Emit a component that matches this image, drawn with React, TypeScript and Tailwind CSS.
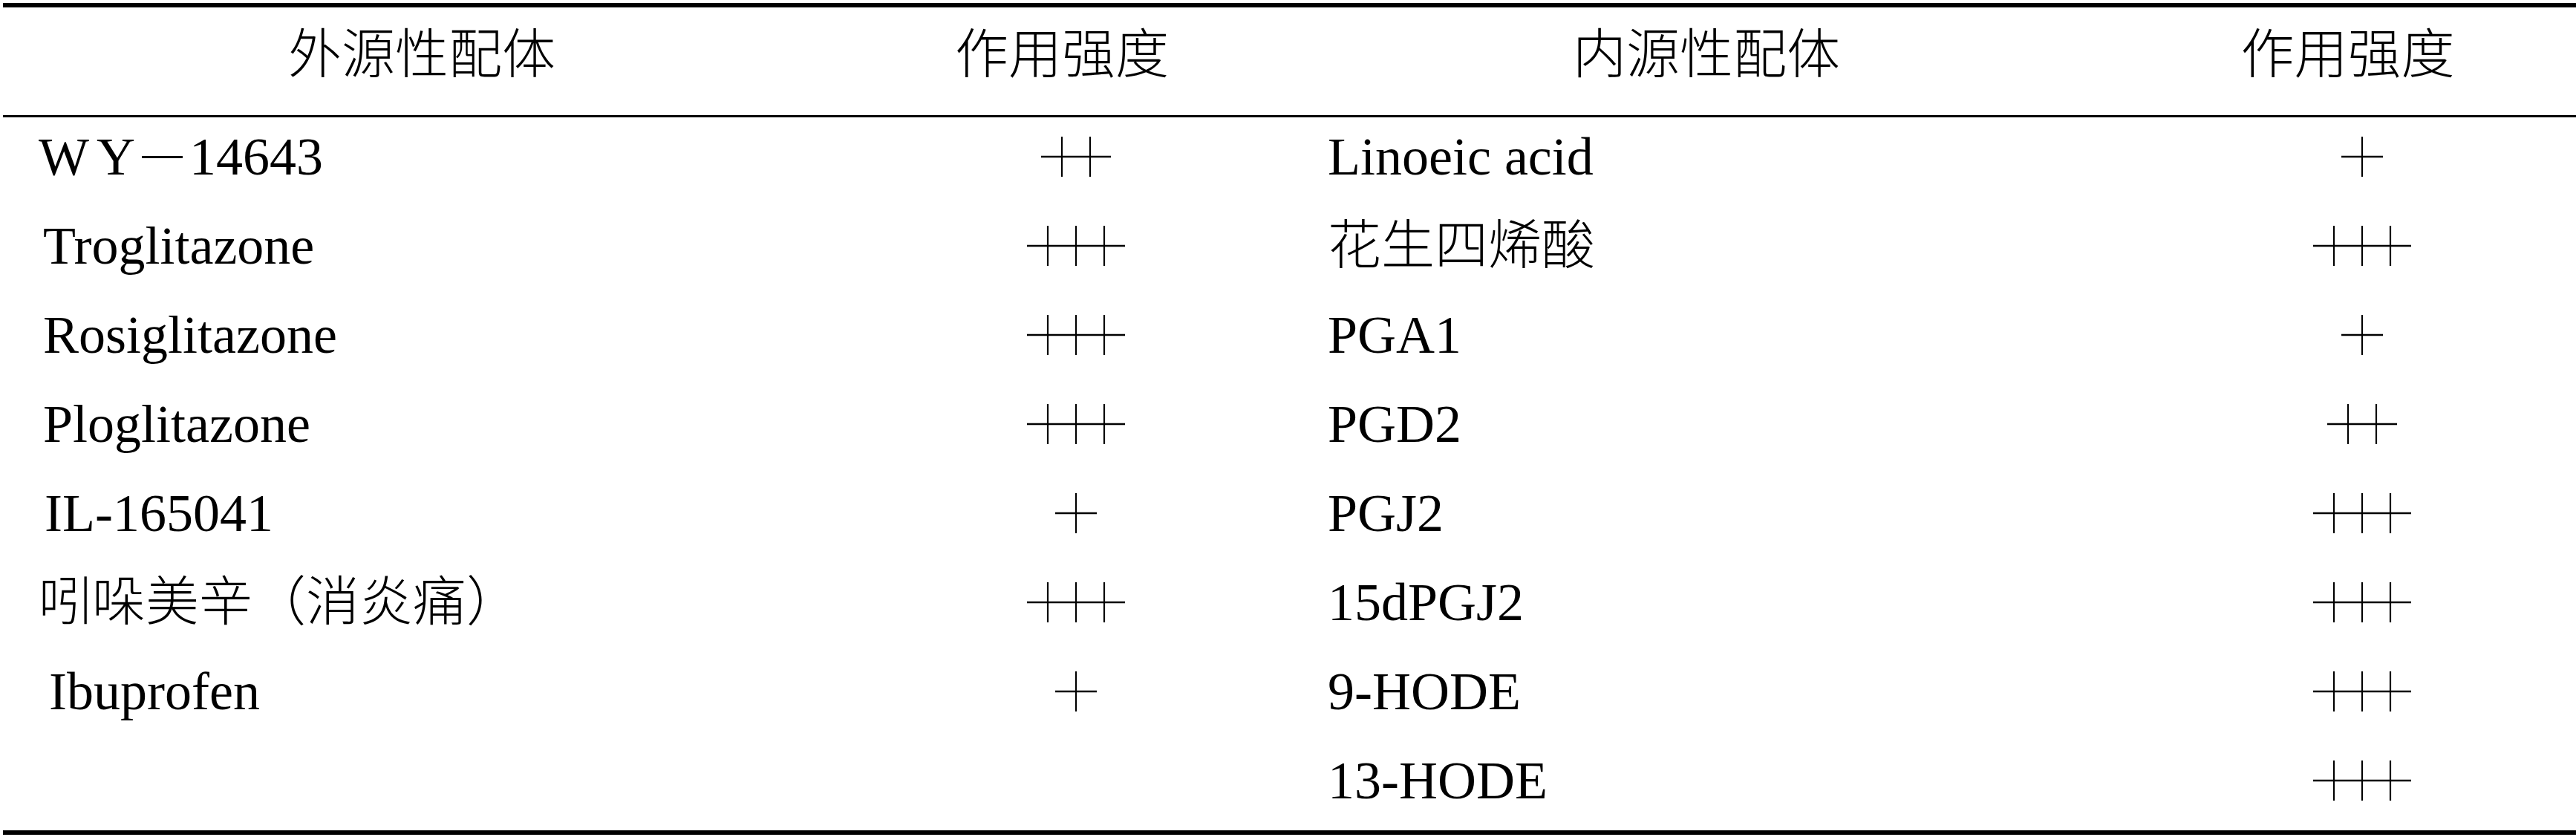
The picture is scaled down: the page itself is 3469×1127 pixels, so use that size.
import React from 'react';

type Row = {
  exo?: React.ReactNode;
  exoPower?: number;
  endo: string;
  endoPower: number;
};

const rows: Row[] = [
  {
    exo: (
      <span className="flex items-center">
        <span>W</span>
        <span className="ml-[10px]">Y</span>
        <span className="mx-[9px] inline-block h-[3px] w-[55px] bg-black" />
        <span>14643</span>
      </span>
    ),
    exoPower: 2,
    endo: 'Linoeic acid',
    endoPower: 1,
  },
  { exo: <span className="pl-[6px]">Troglitazone</span>, exoPower: 3, endo: '花生四烯酸', endoPower: 3 },
  { exo: <span className="pl-[6px]">Rosiglitazone</span>, exoPower: 3, endo: 'PGA1', endoPower: 1 },
  { exo: <span className="pl-[6px]">Ploglitazone</span>, exoPower: 3, endo: 'PGD2', endoPower: 2 },
  { exo: <span className="pl-[8px]">IL-165041</span>, exoPower: 1, endo: 'PGJ2', endoPower: 3 },
  { exo: <span>吲哚美辛（消炎痛）</span>, exoPower: 3, endo: '15dPGJ2', endoPower: 3 },
  { exo: <span className="pl-[14px]">Ibuprofen</span>, exoPower: 1, endo: '9-HODE', endoPower: 3 },
  { endo: '13-HODE', endoPower: 3 },
];

// plus marks drawn as strokes, one vertical per "+"
function Strength({ n }: { n: number }) {
  const w = 38 * (n - 1) + 56;
  return (
    <svg width={w} height={54} viewBox={`0 0 ${w} 54`} className="block">
      <line x1={0} y1={27} x2={w} y2={27} stroke="#000" strokeWidth={2.5} />
      {Array.from({ length: n }).map((_, i) => (
        <line key={i} x1={28 + 38 * i} y1={0} x2={28 + 38 * i} y2={54} stroke="#000" strokeWidth={2.2} />
      ))}
    </svg>
  );
}

const font = "font-['Liberation_Serif','Noto_Sans_CJK_SC',serif]";

export default function App() {
  return (
    <div className={`w-[3469px] h-[1127px] bg-white text-black pt-[4px] pl-[4px] font-light ${font}`}>
      <div className="border-t-[6px] border-b-[6px] border-black">
        {/* Header */}
        <div className="grid grid-cols-[1128px_596px_1140px_1fr] h-[148px] border-b-[3px] border-black pb-[18px] text-[72px] leading-none">
          <div className="flex items-center justify-center">外源性配体</div>
          <div className="flex items-center justify-center">作用强度</div>
          <div className="flex items-center justify-center">内源性配体</div>
          <div className="flex items-center justify-center pr-[14px]">作用强度</div>
        </div>

        {/* Body */}
        <div className="text-[72px] leading-none">
          {rows.map((r, i) => (
            <div key={i} className="grid grid-cols-[1128px_596px_1140px_1fr] h-[120px] pb-[14px]">
              <div className="flex items-center pl-[48px]">{r.exo}</div>
              <div className="flex items-center justify-center pl-[38px]">
                {r.exoPower ? <Strength n={r.exoPower} /> : null}
              </div>
              <div className="flex items-center pl-[60px]">{r.endo}</div>
              <div className="flex items-center justify-center pl-[24px]">
                <Strength n={r.endoPower} />
              </div>
            </div>
          ))}
        </div>
      </div>
    </div>
  );
}
